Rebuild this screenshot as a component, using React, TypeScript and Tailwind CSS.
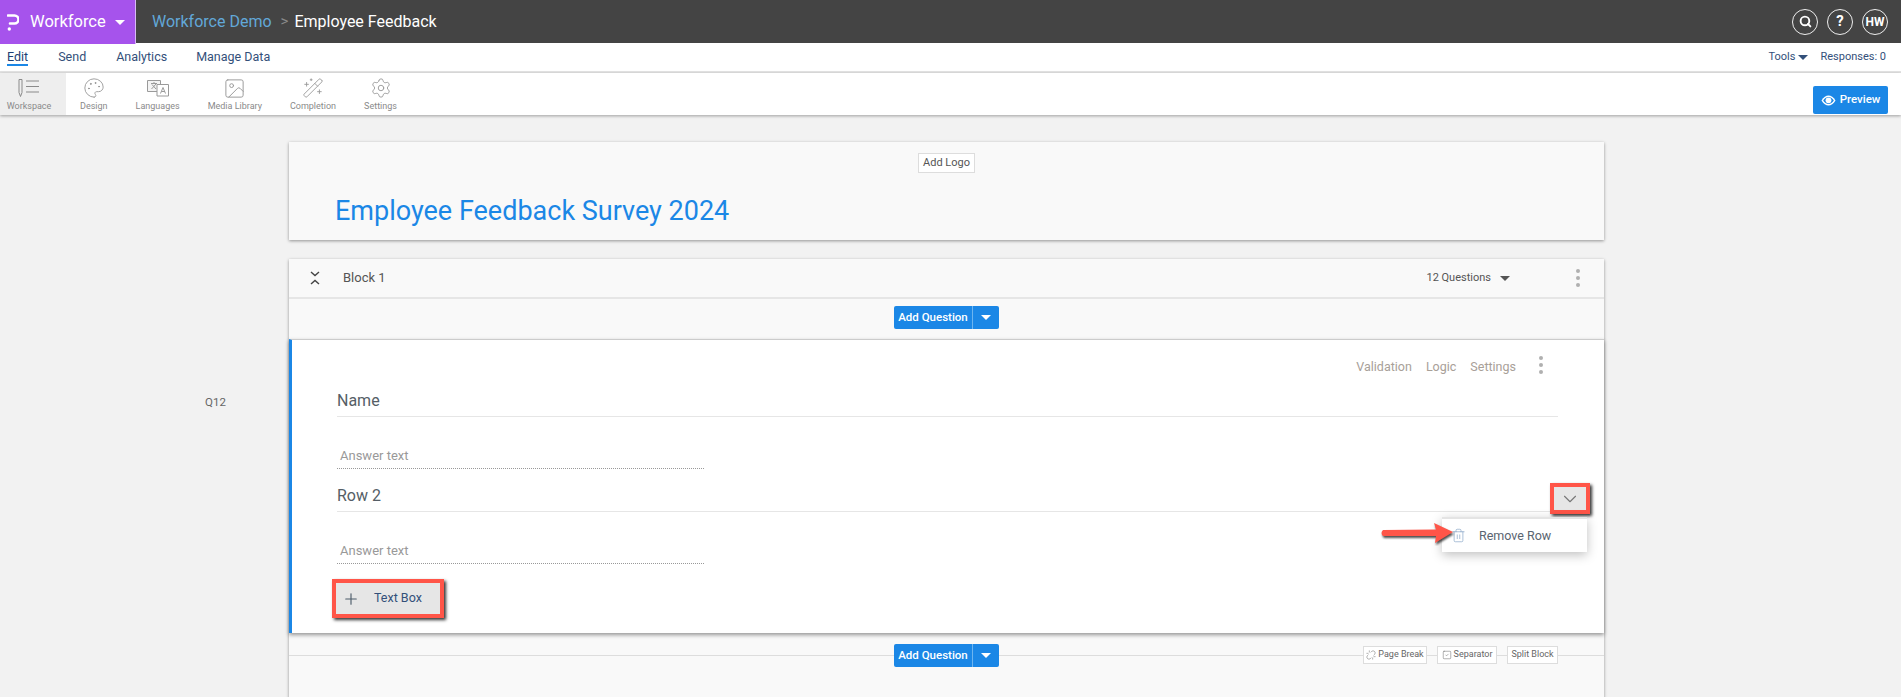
import { Palette, Image, WandSparkles, Settings, Trash2, Search, ChevronDown, Plus, Unlink, SquareCheck } from "lucide-react";

const Caret = ({ className = "" }: { className?: string }) => (
  <span className={`inline-block w-0 h-0 border-x-[5px] border-x-transparent border-t-[5px] ${className}`} />
);

const Dots = ({ className = "" }: { className?: string }) => (
  <span className={`flex flex-col gap-[3px] ${className}`}>
    <span className="w-[4px] h-[4px] rounded-full bg-[#b0b0b0]" />
    <span className="w-[4px] h-[4px] rounded-full bg-[#b0b0b0]" />
    <span className="w-[4px] h-[4px] rounded-full bg-[#b0b0b0]" />
  </span>
);

const WorkspaceIcon = () => (
  <svg width="22" height="20" viewBox="0 0 22 20" fill="none" stroke="#8a8a8a" strokeWidth="1">
    <path d="M1 1.500h3v13l-1.500 4-1.500-4z" />
    <path d="M8 3h13M8 8.500h13M8 14h13" />
  </svg>
);

const LanguagesIcon = () => (
  <svg width="24" height="18" viewBox="0 0 24 18" fill="none" stroke="#9a9a9a" strokeWidth="1">
    <path d="M1.500 1.500h13v11h-13z" fill="#f4f4f4" />
    <path d="M11 5.500h11.500v11.500h-11.500z" fill="#fff" />
    <path d="M5 4.500h6M8 3v1.500M5.500 10l4.500-5M6 5.500l4 4.500" />
    <path d="M14.500 14.500l2.500-6 2.500 6M15.500 12.500h3.500" />
  </svg>
);

const EyeFilled = () => (
  <svg width="15" height="11" viewBox="0 0 15 11">
    <path d="M0.500 5.500C2.500 2 5 0.500 7.500 0.500S12.500 2 14.500 5.500C12.500 9 10 10.500 7.500 10.500S2.500 9 0.500 5.500z" fill="#fff" />
    <path d="M2.200 5.500C3.500 3.200 5.500 2 7.500 2S11.500 3.200 12.800 5.500C11.500 7.800 9.500 9 7.500 9S3.500 7.800 2.200 5.500z" fill="#1b87e6" />
    <circle cx="7.500" cy="5.300" r="2.900" fill="#fff" />
  </svg>
);

const Tool = ({ label, icon, active }: { label: string; icon: React.ReactNode; active?: boolean }) => (
  <div className={`flex flex-col items-center justify-between h-[42px] pt-[3px] pb-[3px] ${active ? "bg-[#eeeeee] w-[66px] pr-[8px]" : "px-[14px]"}`}>
    <div className="h-[24px] flex items-center justify-center">{icon}</div>
    <span className="text-[9px] leading-[11px] text-[#8a8a8a] whitespace-nowrap">{label}</span>
  </div>
);

const AddQuestion = () => (
  <div className="flex w-[105px] h-[23px] rounded-[2px] bg-[#1b87e6] text-white">
    <span className="w-[78px] text-center text-[11.500px] font-medium leading-[23px] whitespace-nowrap">Add Question</span>
    <span className="flex-1 border-l border-[#6db5f0] flex items-center justify-center">
      <Caret className="border-t-white" />
    </span>
  </div>
);

const MiniButton = ({ children, w }: { children: React.ReactNode; w: string }) => (
  <span className={`flex items-center justify-center gap-[2px] h-[18px] border border-[#dddddd] bg-white text-[9px] text-[#666666] whitespace-nowrap ${w}`}>
    {children}
  </span>
);

const RowHeading = ({ text, children }: { text: string; children?: React.ReactNode }) => (
  <div className="relative h-[27px] border-b border-[#e6e6e6] text-[16px] leading-[21px] text-[#555e66]">
    {text}
    {children}
  </div>
);

const AnswerField = () => (
  <div className="w-[367px] h-[22px] border-b border-dotted border-[#999999] pl-[3px] text-[13px] leading-[18px] text-[#999999]">
    Answer text
  </div>
);

export default function App() {
  return (
    <div className="w-[1901px] h-[697px] overflow-hidden bg-[#f2f2f2] flex flex-col font-['Roboto','Noto_Sans',sans-serif]">
      <header className="h-[43px] shrink-0 bg-[#444444] flex items-center text-white">
        <div className="w-[136px] h-[44px] bg-[#a653ec] border-r border-[#d9b8f5] flex items-center pl-[7px] self-start z-10">
          <svg width="12" height="17" viewBox="0 0 12 17">
            <path d="M1 1.500h6.500a3.500 3.500 0 0 1 0 8H3" fill="none" stroke="#fff" strokeWidth="2.600" strokeLinecap="round" />
            <circle cx="2.300" cy="15" r="1.700" fill="#fff" />
          </svg>
          <span className="ml-[11px] text-[16.500px]">Workforce</span>
          <Caret className="ml-[9px] border-t-white" />
        </div>
        <span className="ml-[16px] text-[16px] text-[#62a8d8]">Workforce Demo</span>
        <span className="ml-[9px] mr-[6px] text-[#8a8a8a] text-[15px]">&gt;</span>
        <span className="text-[16px]">Employee Feedback</span>
        <div className="ml-auto mr-[13px] flex gap-[9px]">
          <span className="w-[26px] h-[26px] rounded-full border border-[#eeeeee] flex items-center justify-center">
            <Search size={13} strokeWidth={3.500} />
          </span>
          <span className="w-[26px] h-[26px] rounded-full border border-[#eeeeee] flex items-center justify-center text-[15px] font-bold">?</span>
          <span className="w-[26px] h-[26px] rounded-full border border-[#eeeeee] flex items-center justify-center text-[12px] font-bold">HW</span>
        </div>
      </header>

      <nav className="h-[30px] shrink-0 bg-white border-b-2 border-[#e4e4e4] flex items-center text-[12.500px] text-[#33507a]">
        <span className="ml-[7px] text-[#1d3f73] border-b-2 border-[#1b87e6] leading-[15px]">Edit</span>
        <span className="ml-[30px]">Send</span>
        <span className="ml-[30px]">Analytics</span>
        <span className="ml-[29px]">Manage Data</span>
        <span className="ml-auto text-[11px] flex items-center gap-[3px]">Tools <Caret className="border-x-[3.500px] border-t-[4px] border-t-[#33507a]" /></span>
        <span className="ml-[12px] mr-[15px] text-[11px]">Responses: 0</span>
      </nav>

      <div className="h-[42px] shrink-0 bg-white flex items-center shadow-[0_1px_3px_rgba(0,0,0,0.35)] relative z-10">
        <Tool active label="Workspace" icon={<WorkspaceIcon />} />
        <Tool label="Design" icon={<Palette size={22} strokeWidth={1} color="#999999" />} />
        <Tool label="Languages" icon={<LanguagesIcon />} />
        <Tool label="Media Library" icon={<Image size={23} strokeWidth={1} color="#999999" />} />
        <Tool label="Completion" icon={<WandSparkles size={22} strokeWidth={1} color="#999999" />} />
        <Tool label="Settings" icon={<Settings size={22} strokeWidth={1} color="#999999" />} />
        <button className="ml-auto mr-[13px] mt-[12px] w-[75px] h-[28px] rounded-[2px] bg-[#1b87e6] text-white text-[11.500px] font-medium flex items-center justify-center gap-[4px]">
          <EyeFilled />
          Preview
        </button>
      </div>

      <div className="flex-1 flex min-h-0">
        <div className="w-[289px] shrink-0 pl-[205px] pt-[279px] text-[11.500px] text-[#666666]">Q12</div>
        <main className="w-[1315px] pt-[27px]">
          <section className="h-[98px] bg-[#f9f9f9] shadow-[0_1px_3px_rgba(0,0,0,0.4)] flex flex-col items-center">
            <span className="mt-[11px] h-[20px] px-[4px] border border-[#dddddd] bg-white text-[11px] leading-[18px] text-[#555555]">Add Logo</span>
            <h1 className="self-start ml-[46px] mt-[20px] text-[27px] leading-[36px] text-[#1b87e6]">Employee Feedback Survey 2024</h1>
          </section>

          <section className="mt-[19px] h-[500px] bg-[#f9f9f9] shadow-[0_1px_3px_rgba(0,0,0,0.4)]">
            <div className="h-[40px] border-b-2 border-[#e6e6e6] flex items-center text-[#555555]">
              <svg className="ml-[21px]" width="10" height="14" viewBox="0 0 10 14" fill="none" stroke="#444444" strokeWidth="1.400">
                <path d="M1 1l4 3.500 4-3.500M1 13l4-3.500 4 3.500" />
              </svg>
              <span className="ml-[23px] text-[13px]">Block 1</span>
              <span className="ml-auto text-[11px]">12 Questions</span>
              <Caret className="ml-[9px] border-x-[4px] border-t-[4px] border-t-[#555555]" />
              <Dots className="ml-[66px] mr-[24px]" />
            </div>
            <div className="h-[40px] flex items-center justify-center pb-[3px]">
              <AddQuestion />
            </div>

            <div className="relative h-[294px] bg-white border-l-[3px] border-l-[#1b87e6] border-t border-t-[#cccccc] shadow-[0_2px_4px_rgba(0,0,0,0.4)] pl-[45px] pr-[46px]">
              <div className="h-[50px] flex justify-end items-start gap-[14px] text-[12.500px] leading-[20px] text-[#a8a098] pr-[15px] pt-[17px]">
                <span>Validation</span>
                <span>Logic</span>
                <span>Settings</span>
                <Dots className="ml-[9px] -mt-[1px]" />
              </div>
              <RowHeading text="Name" />
              <div className="h-[30px]" />
              <AnswerField />
              <div className="h-[16px]" />
              <RowHeading text="Row 2">
                <span className="absolute right-[-32px] top-[-2px] w-[40px] h-[31px] border-[4px] border-[#ff5548] bg-[#e6e6e6] shadow-[2px_2px_3px_rgba(0,0,0,0.8)] flex items-center justify-center">
                  <ChevronDown size={22} strokeWidth={1.200} color="#777777" />
                </span>
                <div className="absolute right-[-29px] top-[32px] z-10 w-[145px] h-[35px] bg-white border-t-2 border-[#e4e4e4] shadow-[0_3px_10px_rgba(0,0,0,0.25)] flex items-center pl-[9px]">
                  <Trash2 size={15} strokeWidth={1} color="#7a9cc0" />
                  <span className="ml-[13px] text-[12.500px] text-[#5a6470]">Remove Row</span>
                </div>
                <svg className="absolute right-[102px] top-[35px] z-20" width="78" height="26" viewBox="0 0 78 26">
                  <path d="M5 10L58 9.500 56 3 75 12 57 23 58 16 5 16Q2 13 5 10z" fill="#ff5548" style={{ filter: "drop-shadow(1px 2px 1px rgba(0,0,0,0.7))" }} />
                </svg>
              </RowHeading>
              <div className="h-[30px]" />
              <AnswerField />
              <button className="mt-[15px] -ml-[5px] w-[112px] h-[39px] border-[4px] border-[#ff5548] bg-[#e6e6e6] shadow-[2px_2px_3px_rgba(0,0,0,0.8)] flex items-center pl-[6px] text-[12.500px] text-[#33507a]">
                <Plus size={18} strokeWidth={1.500} color="#4a5a68" />
                <span className="ml-[14px]">Text Box</span>
              </button>
            </div>

            <div className="relative h-[44px] flex items-center justify-center">
              <span className="absolute left-0 right-0 top-[22px] h-[1px] bg-[#dddddd]" />
              <div className="relative">
                <AddQuestion />
              </div>
              <div className="absolute right-[46px] top-[13px] flex gap-[10px]">
                <MiniButton w="w-[64px]"><Unlink size={10} strokeWidth={1.200} />Page Break</MiniButton>
                <MiniButton w="w-[60px]"><SquareCheck size={10} strokeWidth={1.200} />Separator</MiniButton>
                <MiniButton w="w-[51px]">Split Block</MiniButton>
              </div>
            </div>
          </section>
        </main>
      </div>
    </div>
  );
}
